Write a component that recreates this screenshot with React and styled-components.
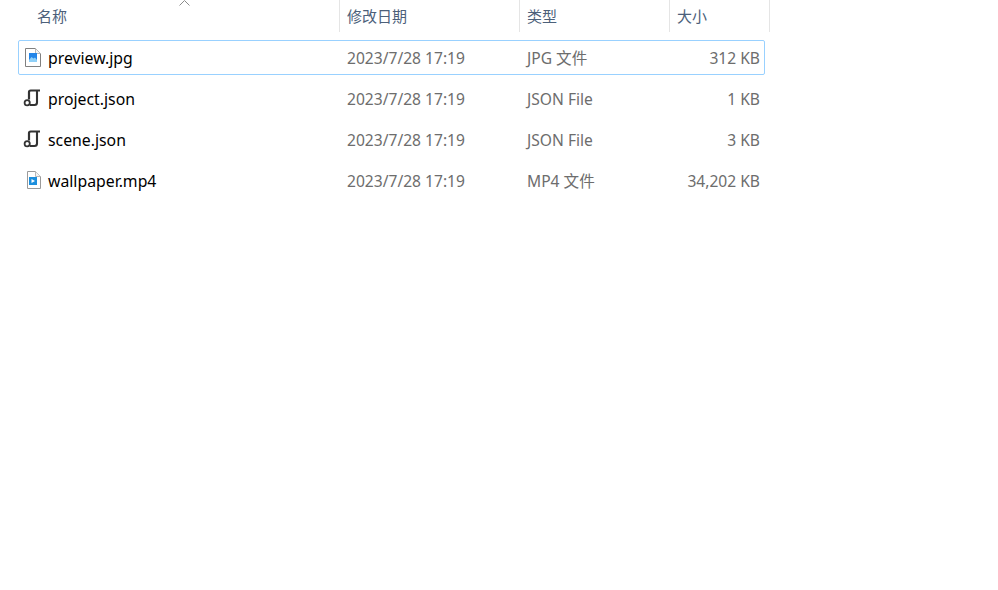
import React from 'react'
import styled, { createGlobalStyle } from 'styled-components'

const GlobalStyle = createGlobalStyle`
  html, body {
    margin: 0;
    padding: 0;
    background: #fff;
  }
  body {
    font-family: 'Noto Sans', 'Noto Sans CJK SC', sans-serif;
  }
`

const files = [
  { name: 'preview.jpg', icon: 'image', type: 'JPG 文件', size: '312 KB', selected: true },
  { name: 'project.json', icon: 'script', type: 'JSON File', size: '1 KB' },
  { name: 'scene.json', icon: 'script', type: 'JSON File', size: '3 KB' },
  { name: 'wallpaper.mp4', icon: 'video', type: 'MP4 文件', size: '34,202 KB' },
]

const ImageIcon = () => (
  <svg width='18' height='20' viewBox='0 0 18 20'>
    <path d='M.5.5h10l5 5v13h-15z' fill='#fff' stroke='#808080' />
    <path d='M10.500.5v5h5' fill='#f4f4f4' stroke='#b8b8b8' />
    <rect x='4' y='5' width='8' height='9' fill='#2385e8' />
    <path d='M4 12l2.500-3 2 1.500 1.500-1 2 2.500v2H4z' fill='#8fd0f8' />
  </svg>
)

const ScriptIcon = () => (
  <svg width='18' height='20' viewBox='0 0 18 20' fill='none' overflow='visible'>
    <path d='M4 10.500V3.200q0-1.700 1.700-1.700h9.300' stroke='#333' strokeWidth='2.200' />
    <path d='M12 1.500V13.500q0 2.500-2.500 2.500H5' stroke='#333' strokeWidth='2.100' />
    <circle cx='2.200' cy='13.700' r='2.600' fill='#fff' stroke='#333' strokeWidth='1.800' />
  </svg>
)

const VideoIcon = () => (
  <svg width='18' height='20' viewBox='0 0 18 20'>
    <path d='M2.500.5h8l5 5v12h-13z' fill='#fff' stroke='#9a9a9a' />
    <path d='M10.500.5v5h5' fill='#f4f4f4' stroke='#b8b8b8' />
    <rect x='4' y='6' width='8' height='8' fill='#1c8fdd' />
    <path d='M6.500 8v4l3.500-2z' fill='#fff' />
  </svg>
)

const icons = { image: ImageIcon, script: ScriptIcon, video: VideoIcon }

const Page = styled.div`
  position: relative;
  width: 998px;
  height: 590px;
  overflow: hidden;
  background: #fff;
  font-size: 15.6px;
`

const Header = styled.div`
  display: grid;
  grid-template-columns: 340px 180px 150px 100px;
  width: 770px;
  height: 32px;
`

const HeaderCell = styled.div`
  display: flex;
  align-items: center;
  padding: 0 0 2px ${(p) => p.$indent}px;
  box-sizing: border-box;
  border-right: 1px solid #e5e5e5;
  color: #4c607a;
  font-size: 15px;
`

const SortArrow = styled.svg`
  position: absolute;
  left: 179px;
  top: 0;
`

const List = styled.div`
  display: flex;
  flex-direction: column;
  gap: 6px;
  width: 747px;
  margin: 8px 0 0 18px;
`

const Row = styled.div`
  display: grid;
  grid-template-columns: 321px 180px 150px 95px;
  align-items: center;
  height: 35px;
  box-sizing: border-box;
  border: 1px solid ${(p) => (p.$selected ? '#99d1ff' : 'transparent')};
  border-radius: 2px;
`

const NameCell = styled.div`
  display: flex;
  align-items: center;
  gap: 4px;
  padding-left: 5px;
  color: #000;
  font-size: 15.8px;
`

const IconBox = styled.span`
  display: flex;
  width: 20px;
  height: 20px;
  align-items: center;
  justify-content: center;
`

const MutedCell = styled.div`
  padding-left: ${(p) => (p.$right ? 0 : 7)}px;
  padding-right: ${(p) => (p.$right ? 5 : 0)}px;
  text-align: ${(p) => (p.$right ? 'right' : 'left')};
  color: #6d6d6d;
`

const App = () => {
  return (
    <Page>
      <GlobalStyle />
      <Header>
        <HeaderCell $indent={37}>名称</HeaderCell>
        <HeaderCell $indent={7}>修改日期</HeaderCell>
        <HeaderCell $indent={7}>类型</HeaderCell>
        <HeaderCell $indent={7}>大小</HeaderCell>
      </Header>
      <SortArrow width='11' height='6' viewBox='0 0 11 6' fill='none'>
        <path d='M.5 5.500L5.500.5l5 5' stroke='#8a8a8a' />
      </SortArrow>
      <List>
        {files.map((file) => {
          const Icon = icons[file.icon]
          return (
            <Row key={file.name} $selected={file.selected}>
              <NameCell>
                <IconBox>
                  <Icon />
                </IconBox>
                {file.name}
              </NameCell>
              <MutedCell>2023/7/28 17:19</MutedCell>
              <MutedCell>{file.type}</MutedCell>
              <MutedCell $right>{file.size}</MutedCell>
            </Row>
          )
        })}
      </List>
    </Page>
  )
}

export default App
